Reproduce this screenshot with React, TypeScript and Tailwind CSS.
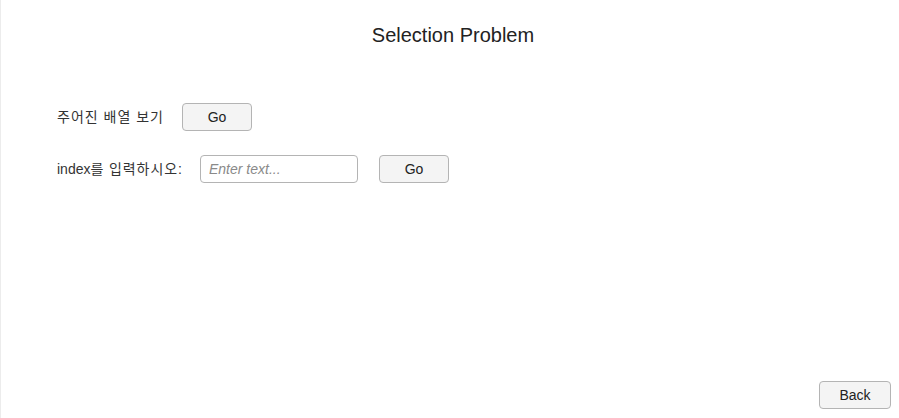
import React from "react";

const font = { fontFamily: '"Liberation Sans", "Noto Sans CJK KR", Arial, sans-serif' };

function Btn({ children, className = "" }: { children: React.ReactNode; className?: string }) {
  return (
    <button
      className={
        "h-[28px] rounded-[4px] border border-[#b4b4b4] bg-[#f4f4f4] text-[14px] text-[#222] leading-none " +
        className
      }
      style={font}
    >
      {children}
    </button>
  );
}

export default function App() {
  return (
    <div
      className="w-[899px] h-[418px] bg-white border-l border-[#ececec] flex flex-col text-[#222]"
      style={font}
    >
      <div className="pt-[23px] pl-[6px] h-[47px] text-center text-[20px] leading-[24px] text-[#222]">
        Selection Problem
      </div>
      <div className="mt-[56px] pl-[56px] flex flex-col gap-[24px]">
        <div className="flex items-center h-[28px]">
          <span className="text-[14px] text-[#333] w-[125px] tracking-[1px]">주어진 배열 보기</span>
          <Btn className="w-[70px]">Go</Btn>
        </div>
        <div className="flex items-center h-[28px]">
          <span className="text-[14px] text-[#333] w-[143px]">
            index<span className="tracking-[0.9px]">를 입력하시오:</span>
          </span>
          <input
            placeholder="Enter text..."
            className="w-[158px] h-[28px] rounded-[4px] border border-[#b4b4b4] bg-white px-[8px] text-[14px] italic placeholder:text-[#8a8a8a] outline-none"
            style={font}
          />
          <Btn className="w-[70px] ml-[21px]">Go</Btn>
        </div>
      </div>
      <div className="mt-auto self-end mr-[8px] mb-[9px]">
        <Btn className="w-[72px]">Back</Btn>
      </div>
    </div>
  );
}
